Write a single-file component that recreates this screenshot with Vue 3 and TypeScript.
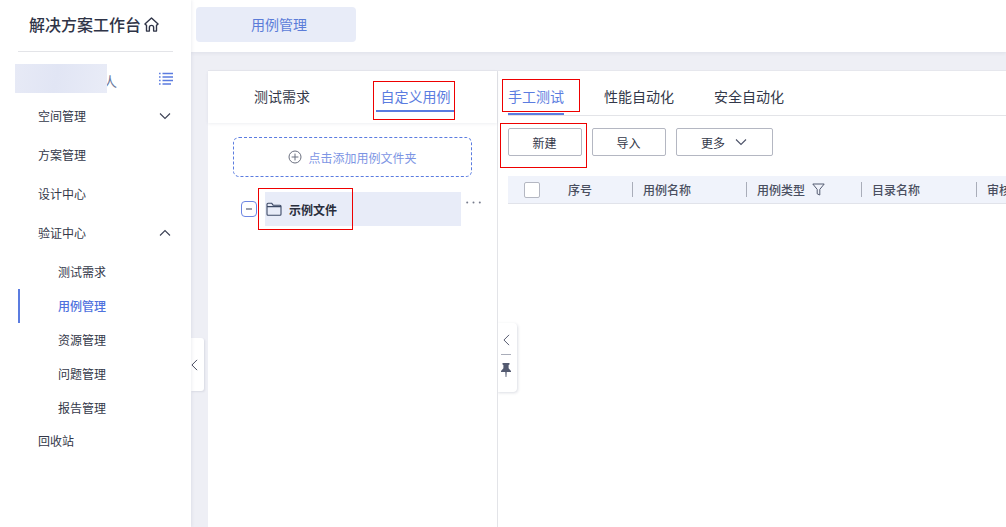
<template>
  <div class="page">
    <aside class="sidebar">
      <div class="brand">
        <span>解决方案工作台</span>
        <svg class="home" viewBox="0 0 16 16" width="17" height="17" fill="none" stroke="#2f3447" stroke-width="1.3">
          <path d="M1.8 7.6 8 1.8l6.2 5.8-1.5 1.2v5.4H10v-3.4a2 2 0 0 0-4 0v3.4H3.3V8.8z" stroke-linejoin="round" />
        </svg>
      </div>
      <div class="workspace">
        <span class="owner">人</span>
        <div class="redact"></div>
        <svg class="list-icon" viewBox="0 0 14 14" width="14" height="14" fill="none" stroke="#5b7ce0" stroke-width="1.4">
          <path d="M0 1.5h1.6M3.5 1.5H14M0 5h1.6M3.5 5H14M0 8.5h1.6M3.5 8.5H14M0 12h1.6M3.5 12H12" />
        </svg>
      </div>
      <nav class="menu">
        <template v-for="item in menu" :key="item.label">
          <div class="menu-item">
            <span>{{ item.label }}</span>
            <svg v-if="item.arrow" viewBox="0 0 12 8" width="12" height="8" fill="none" stroke="#3b4054" stroke-width="1.1">
              <path :d="item.arrow === 'down' ? 'M1 1.5 6 6.5l5-5' : 'M1 6.5 6 1.5l5 5'" />
            </svg>
          </div>
          <div v-if="item.children" class="submenu">
            <div
              v-for="sub in item.children"
              :key="sub"
              class="sub-item"
              :class="{ active: sub === '用例管理' }"
            >{{ sub }}</div>
          </div>
        </template>
      </nav>
    </aside>

    <div class="main">
      <header class="topbar">
        <div class="page-tab">用例管理</div>
      </header>
      <div class="content">
        <button class="collapse-btn">
          <svg viewBox="0 0 8 14" width="7" height="12" fill="none" stroke="#3b4054" stroke-width="1.1"><path d="M7 1 1 7l6 6" /></svg>
        </button>
        <section class="board">
          <div class="tree-panel">
            <div class="tree-tabs">
              <div class="tree-tab">测试需求</div>
              <div class="tree-tab current">自定义用例</div>
            </div>
            <div class="tree-body">
              <div class="add-folder">
                <svg viewBox="0 0 14 14" width="14" height="14" fill="none" stroke="#6b7080" stroke-width="1">
                  <circle cx="7" cy="7" r="6" /><path d="M3.6 7h6.8M7 3.6v6.8" />
                </svg>
                <span>点击添加用例文件夹</span>
              </div>
              <div class="tree-row">
                <span class="minus"></span>
                <div class="tree-node">
                  <svg viewBox="0 0 16 14" width="16" height="14" fill="none" stroke="#3d4a66" stroke-width="1.1">
                    <path d="M1 12.2V2.2q0-1 1-1h3.6l1.5 2H14q1 0 1 1v8q0 1-1 1H2q-1 0-1-1zM1 4.6h14" stroke-linejoin="round" />
                  </svg>
                  <span>示例文件</span>
                </div>
                <svg class="dots" viewBox="0 0 15 3" width="15" height="3" fill="#777c8c">
                  <circle cx="1.2" cy="1.5" r="1" /><circle cx="7.5" cy="1.5" r="1" /><circle cx="13.8" cy="1.5" r="1" />
                </svg>
              </div>
            </div>
          </div>

          <div class="case-panel">
            <button class="pin-handle">
              <svg viewBox="0 0 8 14" width="7" height="12" fill="none" stroke="#4c5268" stroke-width="1.1"><path d="M7 1 1 7l6 6" /></svg>
              <i class="handle-line"></i>
              <svg viewBox="0 0 10 14" width="10" height="14" fill="#535a70">
                <path d="M1.5 0h7v1.4L7.6 2v3.2L10 8v1H5.7l-.3 5h-.8l-.3-5H0V8l2.4-2.8V2l-.9-.6z" />
              </svg>
            </button>
            <div class="case-tabs">
              <div v-for="(tab, i) in caseTabs" :key="tab" class="case-tab" :class="{ current: i === 0 }">{{ tab }}</div>
            </div>
            <div class="toolbar">
              <button class="btn new">新建</button>
              <button class="btn import">导入</button>
              <button class="btn more">
                更多
                <svg viewBox="0 0 12 8" width="12" height="8" fill="none" stroke="#4c5268" stroke-width="1.1"><path d="M1 1.5 6 6.5l5-5" /></svg>
              </button>
            </div>
            <div class="table-head">
              <span class="check"></span>
              <div v-for="col in columns" :key="col.label" class="col" :style="{ width: col.width + 'px' }">
                <span>{{ col.label }}</span>
                <svg v-if="col.filter" viewBox="0 0 13 13" width="13" height="13" fill="none" stroke="#535a70" stroke-width="1">
                  <path d="M.8 1h11.4L7.8 6.4V12L5.2 10.8V6.4z" stroke-linejoin="round" />
                </svg>
              </div>
            </div>
          </div>
        </section>
      </div>
    </div>

    <!-- red annotation frames drawn on top of the screenshot -->
    <i class="mark mark-custom"></i>
    <i class="mark mark-node"></i>
    <i class="mark mark-manual"></i>
    <i class="mark mark-new"></i>
  </div>
</template>

<script setup lang="ts">
interface MenuItem {
  label: string
  arrow?: 'up' | 'down'
  children?: string[]
}

const menu: MenuItem[] = [
  { label: '空间管理', arrow: 'down' },
  { label: '方案管理' },
  { label: '设计中心' },
  { label: '验证中心', arrow: 'up', children: ['测试需求', '用例管理', '资源管理', '问题管理', '报告管理'] },
  { label: '回收站' }
]

const caseTabs = ['手工测试', '性能自动化', '安全自动化']

const columns = [
  { label: '序号', width: 64 },
  { label: '用例名称', width: 114 },
  { label: '用例类型', width: 115, filter: true },
  { label: '目录名称', width: 115 },
  { label: '审核状态', width: 100 }
]
</script>

<style>
html,
body {
  margin: 0;
  overflow: hidden;
  background: #fff;
}
</style>

<style scoped>
* {
  box-sizing: border-box;
}

.page {
  position: relative;
  display: flex;
  width: 1006px;
  height: 527px;
  overflow: hidden;
  font-family: "Noto Sans CJK SC", "Liberation Sans", sans-serif;
  font-size: 12px;
  color: #333849;
}

.sidebar {
  flex: 0 0 191px;
  padding-left: 18px;
  background: #fff;
  box-shadow: 1px 0 3px rgba(40, 50, 90, 0.08);
  z-index: 2;
}

.brand {
  display: flex;
  align-items: center;
  gap: 2px;
  width: 155px;
  height: 52px;
  padding: 0 0 3px 11px;
  border-bottom: 1px solid #e3e4e8;
  font-size: 16px;
  font-weight: 500;
  color: #2f3447;
}

.workspace {
  position: relative;
  display: flex;
  align-items: center;
  justify-content: space-between;
  width: 155px;
  height: 40px;
  margin-top: 4px;
  padding: 6px 0 0 89px;
}

.redact {
  position: absolute;
  left: -3px;
  top: 8px;
  width: 92px;
  height: 29px;
  background: linear-gradient(100deg, #e7eaf6, #e1e5f4 45%, #e9ecf7);
}

.owner {
  margin: 4px 0 0 -4px;
  color: #6d7a9e;
  font-size: 14px;
}

.menu {
  margin-left: -18px;
}

.menu-item {
  display: flex;
  align-items: center;
  justify-content: space-between;
  height: 39px;
  padding: 0 20px 0 38px;
}

.submenu {
  margin: 3px 0 -4px;
}

.sub-item {
  height: 34px;
  line-height: 34px;
  padding-left: 58px;
}

.sub-item.active {
  margin-left: 18px;
  padding-left: 38px;
  border-left: 2px solid #5b7ce0;
  color: #4f72de;
  font-weight: 500;
}

.main {
  flex: 1;
  min-width: 0;
  display: flex;
  flex-direction: column;
}

.topbar {
  height: 52px;
  padding: 7px 5px;
  background: #fff;
  box-shadow: 0 1px 4px rgba(40, 50, 90, 0.08);
  z-index: 1;
}

.page-tab {
  width: 160px;
  height: 35px;
  padding-left: 6px;
  line-height: 35px;
  text-align: center;
  border-radius: 4px;
  background: #e8ecf8;
  color: #5b7cd8;
  font-size: 14px;
}

.content {
  position: relative;
  flex: 1;
  padding: 18px 0 0 17px;
  background: #eeeff5;
}

.collapse-btn {
  position: absolute;
  left: 0;
  top: 286px;
  display: flex;
  align-items: center;
  width: 13px;
  height: 53px;
  padding: 0;
  border: 0;
  border-radius: 0 3px 3px 0;
  background: #fff;
  box-shadow: 1px 1px 2px rgba(40, 50, 90, 0.1);
}

.board {
  display: flex;
  height: 100%;
  background: #fff;
  border-top: 1px solid #e6e7ed;
}

.tree-panel {
  flex: 0 0 290px;
  min-width: 0;
  border-right: 1px solid #e3e4e8;
}

.tree-tabs {
  display: flex;
  height: 52px;
  padding-left: 46px;
  box-shadow: 0 1px 3px rgba(40, 50, 90, 0.08);
}

.tree-tab {
  width: 122px;
  padding-top: 15px;
  font-size: 14px;
  line-height: 20px;
}

.tree-tab.current {
  width: 79px;
  height: 41px;
  text-align: center;
  color: #5b7ce0;
  border-bottom: 2px solid #5b7ce0;
}

.tree-body {
  padding: 14px 25px 0;
}

.add-folder {
  display: flex;
  align-items: center;
  justify-content: center;
  gap: 6px;
  width: 239px;
  height: 40px;
  border: 1px dashed #5b7ce0;
  border-radius: 6px;
  color: #7d95e4;
}

.tree-row {
  display: flex;
  align-items: center;
  height: 34px;
  margin: 15px 0 0 8px;
}

.minus {
  position: relative;
  flex: 0 0 16px;
  height: 16px;
  margin-right: 8px;
  border: 1px solid #6d86e2;
  border-radius: 4px;
}

.minus::after {
  content: "";
  position: absolute;
  left: 4px;
  right: 4px;
  top: 6px;
  height: 2px;
  background: #9a9eab;
}

.tree-node {
  display: flex;
  align-items: center;
  gap: 7px;
  flex: 0 0 196px;
  height: 34px;
  padding-left: 1px;
  background: #e8ecf8;
  font-weight: 700;
  color: #2a2e3c;
}

.dots {
  flex: none;
  margin: -13px 0 0 5px;
}

.case-panel {
  position: relative;
  flex: 1;
  min-width: 0;
  padding-left: 10px;
  overflow: hidden;
}

.pin-handle {
  position: absolute;
  left: -1px;
  top: 252px;
  display: flex;
  flex-direction: column;
  align-items: center;
  gap: 8px;
  width: 20px;
  height: 69px;
  padding: 11px 2px 0 0;
  border: 0;
  border-radius: 0 4px 4px 0;
  background: #fff;
  box-shadow: 1px 1px 3px rgba(40, 50, 90, 0.16);
}

.handle-line {
  width: 10px;
  height: 1px;
  background: #a9adb9;
}

.case-tabs {
  display: flex;
  gap: 40px;
  height: 45px;
  border-bottom: 1px solid #e3e4e8;
  padding-top: 15px;
}

.case-tab {
  height: 29px;
  font-size: 14px;
  line-height: 20px;
}

.case-tab.current {
  color: #5b7ce0;
  border-bottom: 2px solid #5b7ce0;
}

.toolbar {
  display: flex;
  gap: 10px;
  margin-top: 12px;
}

.btn {
  display: flex;
  align-items: center;
  justify-content: center;
  gap: 10px;
  height: 28px;
  padding: 0 1px 0 0;
  border: 1px solid #b4b7c2;
  border-radius: 2px;
  background: #fff;
  font: inherit;
  color: #333849;
}

.new,
.import {
  width: 74px;
}

.more {
  width: 97px;
}

.table-head {
  display: flex;
  align-items: center;
  width: 520px;
  height: 28px;
  margin-top: 20px;
  padding-left: 16px;
  background: #f0f3fb;
  border-bottom: 1px solid #e1e3ea;
  font-weight: 500;
  color: #4a4f60;
}

.check {
  flex: 0 0 16px;
  height: 16px;
  margin-right: 28px;
  border: 1px solid #b4b7c2;
  border-radius: 2px;
  background: #fff;
}

.col {
  display: flex;
  align-items: center;
  gap: 7px;
  flex: none;
  height: 15px;
  padding-left: 10px;
  border-left: 1px solid #a9adb9;
}

.col:first-of-type {
  padding-left: 0;
  border-left: 0;
}

.mark {
  position: absolute;
  border: 1px solid #ee0000;
  z-index: 5;
}

.mark-custom {
  left: 373px;
  top: 81px;
  width: 82px;
  height: 39px;
}

.mark-node {
  left: 258px;
  top: 188px;
  width: 95px;
  height: 42px;
}

.mark-manual {
  left: 502px;
  top: 79px;
  width: 78px;
  height: 33px;
}

.mark-new {
  left: 500px;
  top: 123px;
  width: 87px;
  height: 45px;
}
</style>
